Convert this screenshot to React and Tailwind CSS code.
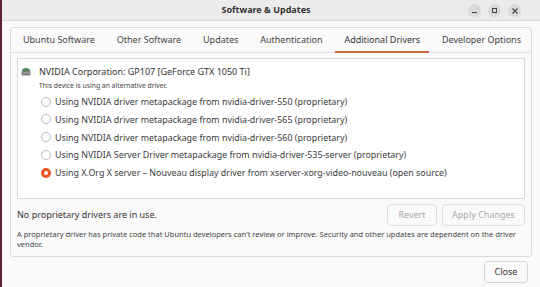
import React from "react";

const font = { fontFamily: '"Noto Sans", "Open Sans", sans-serif' };

function Radio({ checked }) {
  if (checked) {
    return (
      <span className="flex h-[10px] w-[10px] shrink-0 items-center justify-center rounded-full bg-[#e95420]">
        <span className="h-[4px] w-[4px] rounded-full bg-white" />
      </span>
    );
  }
  return <span className="h-[10px] w-[10px] shrink-0 rounded-full border border-[#b9b9b9] bg-white" />;
}

function Chip() {
  return (
    <svg width="10" height="9" viewBox="0 0 10 9" className="shrink-0">
      <path d="M1 4 Q1 1 5 1 Q9 1 9 4 Z" fill="#4f8a55" />
      <rect x="0.5" y="4" width="9" height="4.5" rx="1" fill="#7d7d7d" />
      <rect x="1.5" y="5.5" width="7" height="0.8" fill="#b5b5b5" />
    </svg>
  );
}

export default function App() {
  const tabs = ["Ubuntu Software", "Other Software", "Updates", "Authentication", "Additional Drivers", "Developer Options"];
  const drivers = [
    "Using NVIDIA driver metapackage from nvidia-driver-550 (proprietary)",
    "Using NVIDIA driver metapackage from nvidia-driver-565 (proprietary)",
    "Using NVIDIA driver metapackage from nvidia-driver-560 (proprietary)",
    "Using NVIDIA Server Driver metapackage from nvidia-driver-535-server (proprietary)",
    "Using X.Org X server \u2013 Nouveau display driver from xserver-xorg-video-nouveau (open source)",
  ];
  return (
    <div className="flex h-[287px] w-[540px] overflow-hidden bg-[#fafafa] text-[#3b3b3b]" style={font}>
      <div className="w-[2px] shrink-0 bg-[#5b2233]" />
      <div className="flex min-w-0 flex-1 flex-col">
        <div className="relative flex h-[21px] shrink-0 items-center justify-center border-b border-[#d9d9d9] bg-[#ebebeb]">
          <span className="mr-[10px] text-[9px] font-bold text-[#333]">Software &amp; Updates</span>
          <div className="absolute right-[19px] top-[4px] flex gap-[7px]">
            <span className="flex h-[13px] w-[13px] items-center justify-center rounded-full bg-[#dadada]">
              <span className="mt-[3px] h-[1px] w-[5px] bg-[#444]" />
            </span>
            <span className="flex h-[13px] w-[13px] items-center justify-center rounded-full bg-[#dadada]">
              <span className="h-[5px] w-[5px] border border-[#444]" />
            </span>
            <span className="flex h-[13px] w-[13px] items-center justify-center rounded-full bg-[#dadada]">
              <svg width="6" height="6" viewBox="0 0 6 6">
                <path d="M0.5 0.5 L5.5 5.5 M5.5 0.5 L0.5 5.5" stroke="#444" strokeWidth="1.1" />
              </svg>
            </span>
          </div>
        </div>

        <div className="ml-[8px] mr-[8px] mt-[6px] flex h-[230px] flex-col rounded-[3px] border border-[#dadada]">
          <div className="flex h-[25px] shrink-0 items-stretch justify-between border-b border-[#dedede] pl-[8px] pr-[6px]">
            {tabs.map((t, i) => (
              <div key={t} className="relative flex items-center px-[4px]">
                <span className={`text-[9px] ${i === 4 ? "text-[#333]" : "text-[#444]"}`}>{t}</span>
                {i === 4 && <span className="absolute bottom-[-1px] left-[-5px] right-[-5px] h-[2px] bg-[#c8693a]" />}
              </div>
            ))}
          </div>

          <div className="flex flex-1 flex-col px-[6px] pt-[5px]">
            <div className="flex h-[141px] flex-col border border-[#d9d9d9] bg-white pl-[3px] pt-[6px]">
              <div className="flex items-center gap-[8px]">
                <Chip />
                <span className="text-[9px] text-[#333]">NVIDIA Corporation: GP107 [GeForce GTX 1050 Ti]</span>
              </div>
              <div className="ml-[18px] mt-[2px] text-[6.8px] text-[#444]">This device is using an alternative driver.</div>
              <div className="ml-[20px] mt-[2px] flex flex-col">
                {drivers.map((d, i) => (
                  <div key={d} className="flex h-[17.8px] items-center gap-[4px]">
                    <Radio checked={i === 4} />
                    <span className="whitespace-nowrap text-[8.9px] text-[#3b3b3b]">{d}</span>
                  </div>
                ))}
              </div>
            </div>

            <div className="mt-[5px] flex items-center justify-between">
              <span className="text-[9px] text-[#333]">No proprietary drivers are in use.</span>
              <div className="flex gap-[5px]">
                <span className="flex h-[22px] w-[50px] items-center justify-center rounded-[4px] border border-[#dcdcdc] text-[9px] text-[#a8a8a8]">Revert</span>
                <span className="flex h-[22px] w-[83px] items-center justify-center rounded-[4px] border border-[#dcdcdc] text-[9px] text-[#a8a8a8]">Apply Changes</span>
              </div>
            </div>
            <p className="mt-[3px] text-[7.5px] leading-[10px] text-[#444]">
              A proprietary driver has private code that Ubuntu developers can't review or improve. Security and other updates are dependent on the driver vendor.
            </p>
          </div>
        </div>

        <div className="mr-[12px] mt-[4px] flex justify-end">
          <span className="flex h-[22px] w-[44px] items-center justify-center rounded-[4px] border border-[#d4d4d4] bg-[#fafafa] text-[9px] text-[#333]">Close</span>
        </div>
      </div>
    </div>
  );
}
